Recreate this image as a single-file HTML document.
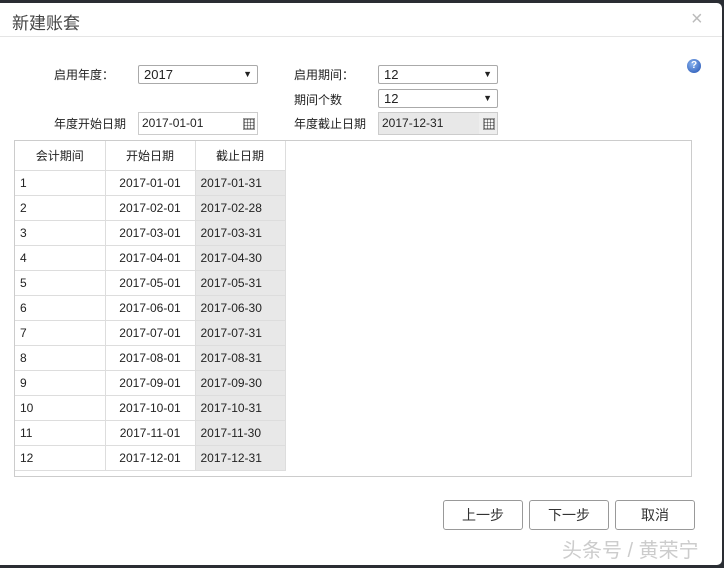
<!DOCTYPE html>
<html><head><meta charset="utf-8"><style>
*{margin:0;padding:0;box-sizing:border-box}
body{width:724px;height:568px;background:#2a2d33;font-family:"Liberation Sans","Noto Sans CJK SC",sans-serif;font-size:12px;color:#222;position:relative;overflow:hidden}
#dlg{position:absolute;left:0;top:3px;width:722px;height:562px;background:#fff;border-radius:0 5px 5px 0}
.a{position:absolute}
.title{left:12px;top:6px;font-size:17px;color:#444}
.close{left:691px;top:5px;font-size:20px;color:#bbb}
.hr{left:0;top:33px;width:722px;height:1px;background:#e5e5e5}
.sel{border:1px solid #aaa;border-radius:2px;height:19px;padding-left:5px;line-height:17px;font-size:13px}
.sel:after{content:"▼";position:absolute;right:5px;top:0;font-size:9px}
.inp{border:1px solid #ccc;height:23px;padding-left:3px;line-height:21px;font-size:12px}
.cal{position:absolute;right:0;top:0;width:18px;height:21px;background:#eee}
.cal:before{content:"";position:absolute;left:4px;top:5px;width:10px;height:10px;border:1px solid #999;background:repeating-linear-gradient(0deg,#999 0 1px,#f6f6f6 1px 3px),repeating-linear-gradient(90deg,#999 0 1px,transparent 1px 3px);background-blend-mode:multiply}
.grid{left:14px;top:137px;width:678px;height:337px;border:1px solid #ccc}
table{position:absolute;left:0;top:0;border-collapse:collapse}
td{width:90px;height:25px;border:1px solid #ddd;padding-left:5px;font-size:12px}
tr:first-child td{height:29px;text-align:center;padding:0}
td:nth-child(2){text-align:center;padding:0}
td:nth-child(3){background:#e8e8e8;padding-left:5px}
tr:first-child td:nth-child(3){background:#fff}
td:first-child{border-left:0}
tr:first-child td{border-top:0}
.btn{top:497px;width:80px;height:30px;border:1px solid #999;border-radius:3px;text-align:center;line-height:28px;font-size:14px;color:#333}
.help{left:687px;top:56px;width:14px;height:14px;border-radius:50%;background:radial-gradient(circle at 40% 35%,#8ab4f0,#1f4fb0);color:#fff;font-size:10px;font-weight:bold;text-align:center;line-height:14px}
.wm{left:562px;top:531px;font-size:20px;color:#ccc}
</style></head><body>
<div id="dlg">
<div class="a title">新建账套</div>
<div class="a close">×</div>
<div class="a hr"></div>
<div class="a" style="left:54px;top:63px">启用年度：</div>
<div class="a sel" style="left:138px;top:62px;width:120px">2017</div>
<div class="a" style="left:294px;top:63px">启用期间：</div>
<div class="a sel" style="left:378px;top:62px;width:120px">12</div>
<div class="a" style="left:294px;top:88px">期间个数</div>
<div class="a sel" style="left:378px;top:86px;width:120px">12</div>
<div class="a" style="left:54px;top:112px">年度开始日期</div>
<div class="a inp" style="left:138px;top:109px;width:120px">2017-01-01<span class="cal" style="background:#fff"></span></div>
<div class="a" style="left:294px;top:112px">年度截止日期</div>
<div class="a inp" style="left:378px;top:109px;width:120px;background:#e8e8e8">2017-12-31<span class="cal"></span></div>
<div class="a help">?</div>
<div class="a grid"><table>
<tr><td>会计期间</td><td>开始日期</td><td>截止日期</td></tr>
<tr><td>1</td><td>2017-01-01</td><td>2017-01-31</td></tr>
<tr><td>2</td><td>2017-02-01</td><td>2017-02-28</td></tr>
<tr><td>3</td><td>2017-03-01</td><td>2017-03-31</td></tr>
<tr><td>4</td><td>2017-04-01</td><td>2017-04-30</td></tr>
<tr><td>5</td><td>2017-05-01</td><td>2017-05-31</td></tr>
<tr><td>6</td><td>2017-06-01</td><td>2017-06-30</td></tr>
<tr><td>7</td><td>2017-07-01</td><td>2017-07-31</td></tr>
<tr><td>8</td><td>2017-08-01</td><td>2017-08-31</td></tr>
<tr><td>9</td><td>2017-09-01</td><td>2017-09-30</td></tr>
<tr><td>10</td><td>2017-10-01</td><td>2017-10-31</td></tr>
<tr><td>11</td><td>2017-11-01</td><td>2017-11-30</td></tr>
<tr><td>12</td><td>2017-12-01</td><td>2017-12-31</td></tr>
</table></div>
<div class="a btn" style="left:443px">上一步</div>
<div class="a btn" style="left:529px">下一步</div>
<div class="a btn" style="left:615px">取消</div>
<div class="a wm">头条号 / 黄荣宁</div>
</div>
</body></html>
